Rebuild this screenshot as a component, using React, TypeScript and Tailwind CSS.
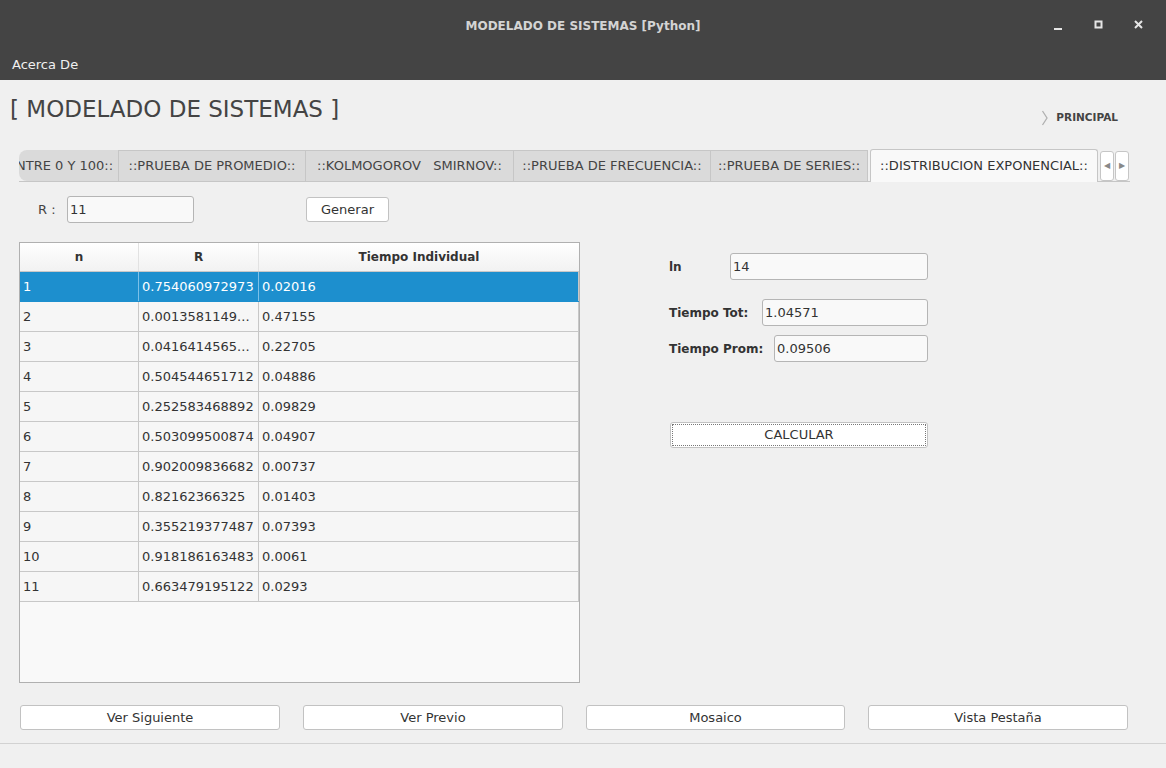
import React from "react";

const filas = [
  ["1", "0.754060972973", "0.02016"],
  ["2", "0.0013581149...", "0.47155"],
  ["3", "0.0416414565...", "0.22705"],
  ["4", "0.504544651712", "0.04886"],
  ["5", "0.252583468892", "0.09829"],
  ["6", "0.503099500874", "0.04907"],
  ["7", "0.902009836682", "0.00737"],
  ["8", "0.82162366325", "0.01403"],
  ["9", "0.355219377487", "0.07393"],
  ["10", "0.918186163483", "0.0061"],
  ["11", "0.663479195122", "0.0293"],
];

const tabs = [
  { t: "::PRUEBA DE PROMEDIO::", w: "w-[187px]" },
  { t: "::KOLMOGOROV   SMIRNOV::", w: "w-[208px]" },
  { t: "::PRUEBA DE FRECUENCIA::", w: "w-[197px]" },
  { t: "::PRUEBA DE SERIES::", w: "w-[157px]" },
];

function Campo({ valor, w }: { valor: string; w: string }) {
  return (
    <div
      className={`${w} flex h-[27px] items-center rounded-[3px] border border-[#b5b5b5] bg-[#f9f9f9] px-[2px] text-[13px] text-[#333]`}
    >
      {valor}
    </div>
  );
}

function Boton({ label, className = "" }: { label: string; className?: string }) {
  return (
    <button
      className={`flex h-[25px] items-center justify-center rounded-[3px] border border-[#c2c2c2] bg-white text-[13px] text-[#333] ${className}`}
    >
      {label}
    </button>
  );
}

export default function App() {
  return (
    <div
      className="flex h-[768px] w-[1166px] flex-col overflow-hidden bg-[#f0f0f0] text-[#333]"
      style={{ fontFamily: '"DejaVu Sans", "Liberation Sans", sans-serif' }}
    >
      {/* barra de título */}
      <div className="relative flex h-[50px] shrink-0 items-center justify-center bg-[#444444]">
        <div className="pt-[1px] text-[12px] font-bold text-[#d4d4d4]">MODELADO DE SISTEMAS [Python]</div>
        <div className="absolute right-[21px] top-[19px] flex items-center gap-[28px] text-[#e6e6e6]">
          <svg width="12" height="12" viewBox="0 0 12 12">
            <rect x="1" y="9" width="8" height="2" fill="currentColor" />
          </svg>
          <svg width="12" height="12" viewBox="0 0 12 12">
            <rect x="2.5" y="2.5" width="6" height="6" fill="none" stroke="currentColor" strokeWidth="2" />
          </svg>
          <svg width="12" height="12" viewBox="0 0 12 12">
            <path d="M2 2 L9 9 M9 2 L2 9" stroke="currentColor" strokeWidth="2" />
          </svg>
        </div>
      </div>
      <div className="flex h-[30px] shrink-0 items-center bg-[#444444] px-[12px] text-[13px] text-[#f0f0f0]">
        Acerca De
      </div>

      {/* cuerpo */}
      <div className="flex flex-1 flex-col">
        <div className="mt-[14px] flex h-[30px] items-start justify-between pl-[10px] pr-[48px]">
          <div className="text-[23px] leading-[30px] text-[#444]">[ MODELADO DE SISTEMAS ]</div>
          <div className="mt-[16px] flex items-center gap-[7px] text-[10.5px] font-bold text-[#444]">
            <svg width="8" height="16" viewBox="0 0 8 16">
              <path d="M1.5 1 L6 8 L1.5 15" fill="none" stroke="#b0b0b0" strokeWidth="1.3" />
            </svg>
            PRINCIPAL
          </div>
        </div>

        {/* pestañas */}
        <div className="ml-[19px] mt-[26px] flex h-[32px] w-[1111px] items-end border-b border-[#c6c6c6]">
          <div className="flex h-[31px] w-[100px] items-center overflow-hidden rounded-l-[8px] border-r border-[#c6c6c6] bg-[#dadada] text-[13px] text-[#444]">
            <span className="ml-[-3px] whitespace-nowrap">NTRE 0 Y 100::</span>
          </div>
          {tabs.map((t) => (
            <div
              key={t.t}
              className={`${t.w} flex h-[31px] items-center justify-center whitespace-pre border-r border-t border-[#c6c6c6] bg-[#dadada] text-[13px] text-[#444]`}
            >
              {t.t}
            </div>
          ))}
          <div className="ml-[2px] mb-[-1px] flex h-[33px] w-[228px] items-center justify-center rounded-t-[3px] border border-b-0 border-[#c6c6c6] bg-[#f9f9f9] text-[13px] text-[#333]">
            ::DISTRIBUCION EXPONENCIAL::
          </div>
          <div className="mb-[-1px] ml-[2px] flex h-[31px] items-center gap-[1px] self-start">
            <div className="flex h-[30px] w-[14px] items-center justify-center rounded-[3px] border border-[#c6c6c6] bg-white text-[8px] text-[#888]">
              ◀
            </div>
            <div className="flex h-[30px] w-[14px] items-center justify-center rounded-[3px] border border-[#c6c6c6] bg-white text-[8px] text-[#888]">
              ▶
            </div>
          </div>
        </div>

        {/* contenido de la pestaña */}
        <div className="flex flex-1 flex-col pl-[19px]">
          <div className="mt-[14px] flex items-center">
            <span className="ml-[19px] w-[29px] text-[13px] text-[#444]">R :</span>
            <Campo valor="11" w="w-[127px]" />
            <Boton label="Generar" className="ml-[112px] w-[83px]" />
          </div>

          <div className="mt-[19px] flex">
            {/* tabla */}
            <div className="flex h-[441px] w-[561px] flex-col border border-[#b0b0b0] bg-[#f9f9f9]">
              <div className="flex h-[29px] border-b border-[#c8c8c8] bg-gradient-to-b from-white to-[#f2f2f2] text-[12px] font-bold text-[#333]">
                <div className="flex w-[119px] items-center justify-center border-r border-[#e2e2e2]">n</div>
                <div className="flex w-[120px] items-center justify-center border-r border-[#e2e2e2]">R</div>
                <div className="flex flex-1 items-center justify-center">Tiempo Individual</div>
              </div>
              {filas.map((f, i) => {
                const sel = i === 0;
                return (
                  <div
                    key={f[0]}
                    className={`flex h-[30px] border-b text-[13px] ${
                      sel
                        ? "border-[#1d8fce] bg-[#1d8fce] text-white"
                        : "border-[#c8c8c8] bg-[#f6f6f6] text-[#333]"
                    }`}
                  >
                    <div className={`flex w-[119px] items-center border-r px-[3px] ${sel ? "border-[#7cc0e8]" : "border-[#c8c8c8]"}`}>
                      {f[0]}
                    </div>
                    <div className={`flex w-[120px] items-center border-r px-[3px] ${sel ? "border-[#7cc0e8]" : "border-[#c8c8c8]"}`}>
                      {f[1]}
                    </div>
                    <div className="flex flex-1 items-center border-r border-[#c8c8c8] px-[3px]">{f[2]}</div>
                  </div>
                );
              })}
            </div>

            {/* panel derecho */}
            <div className="ml-[89px] flex flex-col pt-[11px]">
              <div className="flex items-center">
                <span className="w-[61px] text-[12px] font-bold text-[#333]">ln</span>
                <Campo valor="14" w="w-[198px]" />
              </div>
              <div className="mt-[19px] flex items-center">
                <span className="w-[93px] text-[12px] font-bold text-[#333]">Tiempo Tot:</span>
                <Campo valor="1.04571" w="w-[166px]" />
              </div>
              <div className="mt-[9px] flex items-center">
                <span className="w-[105px] text-[12px] font-bold text-[#333]">Tiempo Prom:</span>
                <Campo valor="0.09506" w="w-[154px]" />
              </div>
              <div className="mt-[60px] ml-[1px] flex h-[26px] w-[258px] items-center rounded-[3px] border border-[#c2c2c2] bg-white p-[1px]">
                <div className="flex h-full w-full items-center justify-center border border-dotted border-[#777] text-[13px] text-[#333]">
                  CALCULAR
                </div>
              </div>
            </div>
          </div>

          <div className="mt-[22px] flex gap-[23px] pl-[1px]">
            <Boton label="Ver Siguiente" className="w-[260px]" />
            <Boton label="Ver Previo" className="w-[260px]" />
            <Boton label="Mosaico" className="w-[259px]" />
            <Boton label="Vista Pestaña" className="w-[260px]" />
          </div>
        </div>

        <div className="h-[25px] shrink-0 border-t border-[#d2d2d2]" />
      </div>
    </div>
  );
}
